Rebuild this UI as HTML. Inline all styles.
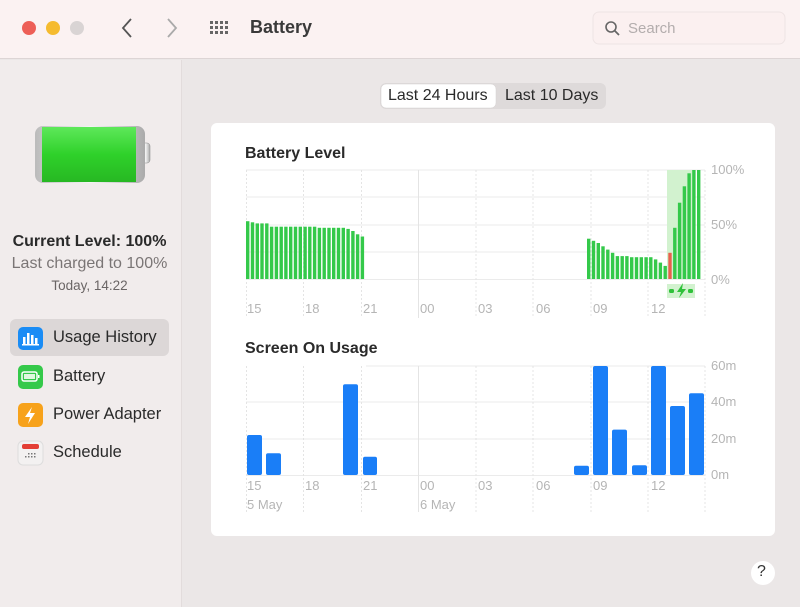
<!DOCTYPE html>
<html><head><meta charset="utf-8"><style>
*{margin:0;padding:0;box-sizing:border-box}
body{width:800px;height:607px;overflow:hidden;font-family:"Liberation Sans",sans-serif;background:#ebe7e7;position:relative}
.t{position:absolute;white-space:nowrap}
</style></head><body>
<div style="position:absolute;left:0;top:0;width:800px;height:59px;background:#fbf2f2;border-bottom:1px solid #ddd5d5"></div>
<div style="position:absolute;left:0;top:60px;width:182px;height:547px;background:#f1ecec;border-right:1px solid #e2dcdc"></div>
<div style="position:absolute;left:211px;top:123px;width:564px;height:413px;background:#fff;border-radius:6px"></div>

<svg width="800" height="607" style="position:absolute;left:0;top:0">
<defs>
<linearGradient id="bg" x1="0" y1="0" x2="0" y2="1"><stop offset="0" stop-color="#5ee85a"/><stop offset="0.5" stop-color="#2fd12a"/><stop offset="1" stop-color="#27b823"/></linearGradient>
<linearGradient id="sh" x1="0" y1="0" x2="1" y2="0"><stop offset="0" stop-color="#bbb"/><stop offset="0.5" stop-color="#f5f5f5"/><stop offset="1" stop-color="#aaa"/></linearGradient>
</defs>
<circle cx="29" cy="28" r="7" fill="#ed5f57"/><circle cx="53" cy="28" r="7" fill="#f5bb2f"/><circle cx="77" cy="28" r="7" fill="#d9d4d4"/>
<path d="M131 19 L123 28 L131 37" stroke="#555" stroke-width="1.8" fill="none"/>
<path d="M168 19 L176 28 L168 37" stroke="#aaa" stroke-width="1.8" fill="none"/>
<g fill="#666">
<rect x="210" y="21" width="3" height="3"/><rect x="215" y="21" width="3" height="3"/><rect x="220" y="21" width="3" height="3"/><rect x="225" y="21" width="3" height="3"/>
<rect x="210" y="26" width="3" height="3"/><rect x="215" y="26" width="3" height="3"/><rect x="220" y="26" width="3" height="3"/><rect x="225" y="26" width="3" height="3"/>
<rect x="210" y="31" width="3" height="3"/><rect x="215" y="31" width="3" height="3"/><rect x="220" y="31" width="3" height="3"/><rect x="225" y="31" width="3" height="3"/>
</g>
<rect x="593" y="12" width="192" height="32" rx="6" fill="#fbf0f0" stroke="#eee4e4"/>
<circle cx="611" cy="27" r="5" stroke="#666" stroke-width="1.6" fill="none"/><path d="M615 31 L619 35" stroke="#666" stroke-width="1.8"/>
<rect x="141" y="143" width="9" height="20" rx="3" fill="url(#sh)" stroke="#888" stroke-width="0.5"/>
<rect x="35" y="126" width="110" height="57" rx="8" fill="url(#sh)"/>
<rect x="42" y="127" width="94" height="55" fill="url(#bg)"/>
<rect x="380" y="83" width="226" height="26" rx="6" fill="#dedada"/>
<rect x="381" y="84" width="115" height="24" rx="5" fill="#fff" stroke="#d4d0d0" stroke-width="0.5"/>
<rect x="10" y="319" width="159" height="37" rx="6" fill="#dcd7d7"/>
<rect x="18" y="327" width="25" height="23" rx="5" fill="#1a8cf5"/>
<g fill="#fff"><rect x="23" y="337" width="2.5" height="8"/><rect x="27" y="333" width="2.5" height="12"/><rect x="31" y="335" width="2.5" height="10"/><rect x="35" y="338" width="2.5" height="7"/><rect x="22" y="344" width="17" height="1.5"/></g>
<rect x="18" y="365" width="25" height="24" rx="5" fill="#35c94a"/>
<rect x="22" y="372" width="15" height="9" rx="2" fill="none" stroke="#fff" stroke-width="1.5"/><rect x="24" y="374" width="11" height="5" fill="#dff7df"/><rect x="38" y="375" width="1.5" height="3" fill="#fff"/>
<rect x="18" y="403" width="25" height="24" rx="5" fill="#f7a21b"/>
<path d="M32 407 L25 417 L30 417 L28 424 L35 413 L30 413 Z" fill="#fff"/>
<rect x="18" y="441" width="25" height="24" rx="5" fill="#f3f1f1" stroke="#ddd"/>
<rect x="22" y="444" width="17" height="5" rx="2" fill="#e33e35"/>
<g fill="#777"><rect x="28" y="453" width="1.5" height="1.5"/><rect x="31" y="453" width="1.5" height="1.5"/><rect x="34" y="453" width="1.5" height="1.5"/><rect x="25" y="456" width="1.5" height="1.5"/><rect x="28" y="456" width="1.5" height="1.5"/><rect x="31" y="456" width="1.5" height="1.5"/><rect x="34" y="456" width="1.5" height="1.5"/></g>
<g stroke="#ebebeb" stroke-width="1">
<line x1="246" y1="170" x2="705" y2="170"/><line x1="246" y1="197" x2="705" y2="197"/><line x1="246" y1="225" x2="705" y2="225"/><line x1="246" y1="252" x2="705" y2="252"/><line x1="246" y1="279.5" x2="705" y2="279.5"/>
<line x1="366" y1="366" x2="705" y2="366"/><line x1="246" y1="402" x2="705" y2="402"/><line x1="246" y1="439" x2="705" y2="439"/><line x1="246" y1="475.5" x2="705" y2="475.5"/>
</g>
<g stroke="#e4e4e4" stroke-dasharray="2,2">
<line x1="246.5" y1="170" x2="246.5" y2="318"/><line x1="303.5" y1="170" x2="303.5" y2="318"/><line x1="361.5" y1="170" x2="361.5" y2="318"/><line x1="476" y1="170" x2="476" y2="318"/><line x1="533" y1="170" x2="533" y2="318"/><line x1="591" y1="170" x2="591" y2="318"/><line x1="648" y1="170" x2="648" y2="318"/><line x1="705" y1="170" x2="705" y2="318"/>
<line x1="246.5" y1="366" x2="246.5" y2="512"/><line x1="303.5" y1="366" x2="303.5" y2="512"/><line x1="361.5" y1="366" x2="361.5" y2="512"/><line x1="476" y1="366" x2="476" y2="512"/><line x1="533" y1="366" x2="533" y2="512"/><line x1="591" y1="366" x2="591" y2="512"/><line x1="648" y1="366" x2="648" y2="512"/><line x1="705" y1="366" x2="705" y2="512"/>
</g>
<line x1="418.5" y1="170" x2="418.5" y2="318" stroke="#e4e4e4"/><line x1="418.5" y1="366" x2="418.5" y2="512" stroke="#e4e4e4"/>
<rect x="667" y="170" width="28" height="109" fill="#d2f2cf"/>
<rect x="667" y="284" width="28" height="14" fill="#d2f2cf"/>
<path d="M683 283 L677 292 L681 292 L679 298 L686 289 L682 289 Z" fill="#2fc13a"/>
<rect x="669" y="289" width="5" height="4" rx="1.5" fill="#2fc13a"/><rect x="688" y="289" width="5" height="4" rx="1.5" fill="#2fc13a"/>
<g fill="#34c94a">
<rect x="246" y="221.2" width="3.4" height="57.8"/><rect x="250.8" y="222.3" width="3.4" height="56.7"/><rect x="255.6" y="223.4" width="3.4" height="55.6"/><rect x="260.3" y="223.4" width="3.4" height="55.6"/><rect x="265.1" y="223.4" width="3.4" height="55.6"/>
<rect x="269.9" y="226.7" width="3.4" height="52.3"/><rect x="274.7" y="226.7" width="3.4" height="52.3"/><rect x="279.5" y="226.7" width="3.4" height="52.3"/><rect x="284.2" y="226.7" width="3.4" height="52.3"/><rect x="289" y="226.7" width="3.4" height="52.3"/><rect x="293.8" y="226.7" width="3.4" height="52.3"/><rect x="298.6" y="226.7" width="3.4" height="52.3"/><rect x="303.4" y="226.7" width="3.4" height="52.3"/><rect x="308.1" y="226.7" width="3.4" height="52.3"/><rect x="312.9" y="226.7" width="3.4" height="52.3"/>
<rect x="317.7" y="227.8" width="3.4" height="51.2"/><rect x="322.5" y="227.8" width="3.4" height="51.2"/><rect x="327.3" y="227.8" width="3.4" height="51.2"/><rect x="332" y="227.8" width="3.4" height="51.2"/><rect x="336.8" y="227.8" width="3.4" height="51.2"/><rect x="341.6" y="227.8" width="3.4" height="51.2"/>
<rect x="346.4" y="228.9" width="3.4" height="50.1"/><rect x="351.2" y="231" width="3.4" height="48"/><rect x="355.9" y="234.3" width="3.4" height="44.7"/><rect x="360.7" y="236.5" width="3.4" height="42.5"/>
<rect x="587" y="238.7" width="3.4" height="40.3"/><rect x="591.8" y="240.8" width="3.4" height="38.2"/><rect x="596.6" y="243" width="3.4" height="36"/><rect x="601.3" y="246.3" width="3.4" height="32.7"/><rect x="606.1" y="249.6" width="3.4" height="29.4"/><rect x="610.9" y="252.8" width="3.4" height="26.2"/>
<rect x="615.7" y="256.1" width="3.4" height="22.9"/><rect x="620.5" y="256.1" width="3.4" height="22.9"/><rect x="625.2" y="256.1" width="3.4" height="22.9"/><rect x="630" y="257.2" width="3.4" height="21.8"/><rect x="634.8" y="257.2" width="3.4" height="21.8"/><rect x="639.6" y="257.2" width="3.4" height="21.8"/><rect x="644.4" y="257.2" width="3.4" height="21.8"/><rect x="649.1" y="257.2" width="3.4" height="21.8"/>
<rect x="653.9" y="259.4" width="3.4" height="19.6"/><rect x="658.7" y="262.6" width="3.4" height="16.4"/><rect x="663.5" y="265.9" width="3.4" height="13.1"/>
<rect x="673.1" y="227.8" width="3.4" height="51.2"/><rect x="677.9" y="202.7" width="3.4" height="76.3"/><rect x="682.7" y="186.3" width="3.4" height="92.7"/><rect x="687.4" y="173.3" width="3.4" height="105.7"/><rect x="692.2" y="170" width="3.4" height="109"/><rect x="697" y="170" width="3.4" height="109"/>
</g>
<rect x="668.3" y="252.8" width="3.4" height="26.2" fill="#e8604c"/>
<g fill="#1a7ef7">
<rect x="247" y="435" width="15" height="40" rx="2"/><rect x="266" y="453.2" width="15" height="21.8" rx="2"/><rect x="343" y="384.2" width="15" height="90.8" rx="2"/><rect x="363" y="456.8" width="14" height="18.2" rx="2"/>
<rect x="574" y="465.7" width="15" height="9.3" rx="2"/><rect x="593" y="366" width="15" height="109" rx="2"/><rect x="612" y="429.6" width="15" height="45.4" rx="2"/><rect x="632" y="465.2" width="15" height="9.8" rx="2"/><rect x="651" y="366" width="15" height="109" rx="2"/><rect x="670" y="406" width="15" height="69" rx="2"/><rect x="689" y="393.2" width="15" height="81.8" rx="2"/>
</g>
<circle cx="763" cy="573" r="12" fill="#fff"/>
</svg>

<div class="t" style="left:250px;top:17px;font-size:18px;font-weight:bold;color:#3a3a3a">Battery</div>
<div class="t" style="left:628px;top:20px;font-size:15px;color:#b3adad">Search</div>
<div class="t" style="left:388px;top:87px;font-size:16px;color:#2a2a2a">Last 24 Hours</div>
<div class="t" style="left:505px;top:87px;font-size:16px;color:#2a2a2a">Last 10 Days</div>

<div class="t" style="left:0;width:179px;text-align:center;top:233px;font-size:16px;font-weight:bold;color:#2a2a2a">Current Level: 100%</div>
<div class="t" style="left:0;width:179px;text-align:center;top:255px;font-size:16px;color:#7a7575">Last charged to 100%</div>
<div class="t" style="left:0;width:179px;text-align:center;top:278px;font-size:13.5px;color:#6a6565">Today, 14:22</div>
<div class="t" style="left:53px;top:328px;font-size:16.5px;color:#2a2a2a">Usage History</div>
<div class="t" style="left:53px;top:367px;font-size:16.5px;color:#2a2a2a">Battery</div>
<div class="t" style="left:53px;top:405px;font-size:16.5px;color:#2a2a2a">Power Adapter</div>
<div class="t" style="left:53px;top:443px;font-size:16.5px;color:#2a2a2a">Schedule</div>

<div class="t" style="left:245px;top:145px;font-size:16px;font-weight:bold;color:#2a2a2a">Battery Level</div>
<div class="t" style="left:245px;top:340px;font-size:16px;font-weight:bold;color:#2a2a2a">Screen On Usage</div>
<div style="position:absolute;left:711px;top:163px;font-size:13px;color:#b5b5b5;line-height:14px">
<div style="position:absolute;top:0">100%</div><div style="position:absolute;top:55px">50%</div><div style="position:absolute;top:110px">0%</div>
<div style="position:absolute;top:196px">60m</div><div style="position:absolute;top:232px">40m</div><div style="position:absolute;top:269px">20m</div><div style="position:absolute;top:305px">0m</div>
</div>
<div style="position:absolute;left:0;top:301px;font-size:13px;color:#b5b5b5">
<span class="t" style="left:247px">15</span><span class="t" style="left:305px">18</span><span class="t" style="left:363px">21</span><span class="t" style="left:420px">00</span><span class="t" style="left:478px">03</span><span class="t" style="left:536px">06</span><span class="t" style="left:593px">09</span><span class="t" style="left:651px">12</span>
</div>
<div style="position:absolute;left:0;top:478px;font-size:13px;color:#b5b5b5">
<span class="t" style="left:247px">15</span><span class="t" style="left:305px">18</span><span class="t" style="left:363px">21</span><span class="t" style="left:420px">00</span><span class="t" style="left:478px">03</span><span class="t" style="left:536px">06</span><span class="t" style="left:593px">09</span><span class="t" style="left:651px">12</span>
<span class="t" style="left:247px;top:19px">5 May</span><span class="t" style="left:420px;top:19px">6 May</span>
</div>
<div class="t" style="left:757px;top:563px;font-size:16px;color:#333">?</div>
</body></html>
